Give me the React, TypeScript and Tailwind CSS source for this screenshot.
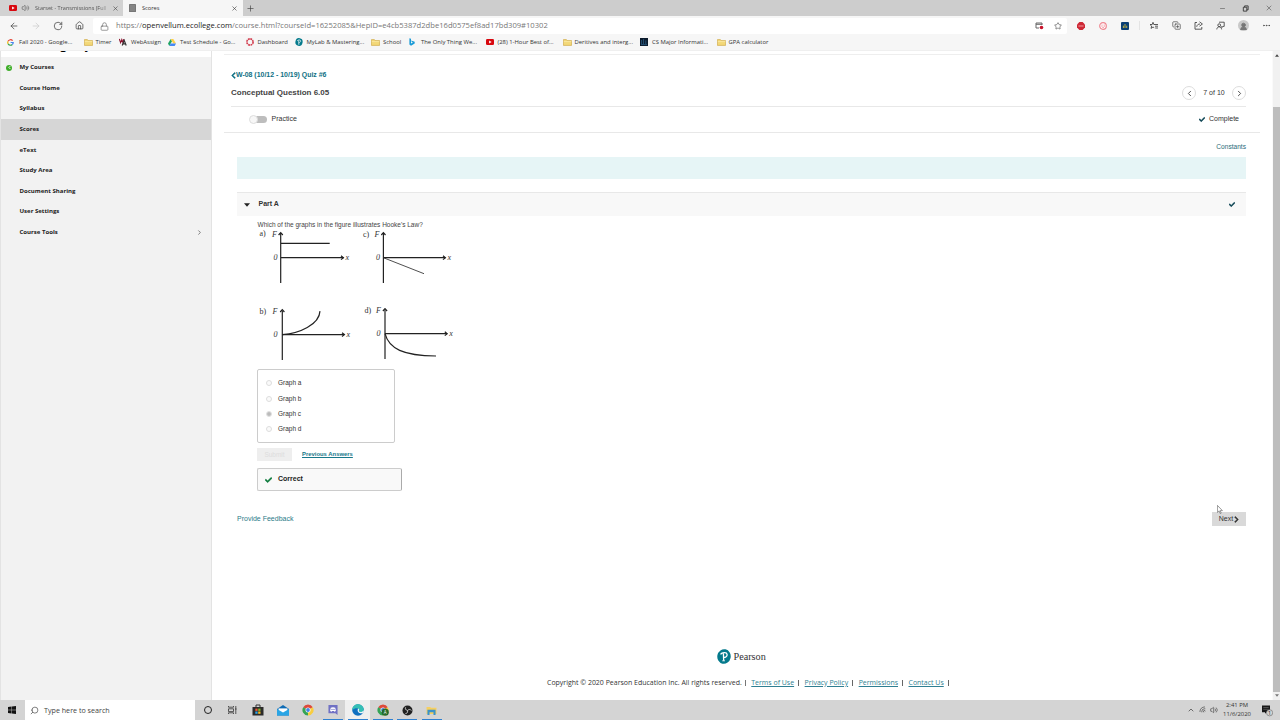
import type { ReactNode } from "react";
import {
  ArrowLeft,
  ArrowRight,
  ChevronLeft,
  ChevronRight,
  ChevronUp,
  CopyPlus,
  Ellipsis,
  Home,
  Lock,
  Minus,
  Plus,
  RotateCw,
  Search,
  Star,
  UserRound,
  Volume2,
  Wifi,
  X,
} from "lucide-react";
import { FaCheck, FaChevronLeft, FaChevronRight } from "react-icons/fa";

const YouTube = () => (
  <svg viewBox="0 0 8 6" className="h-[6px] w-[8px]">
    <rect width="8" height="6" rx="1.3" fill="#d8080f" />
    <path d="M3.1 1.6v2.8L5.6 3z" fill="#fff" />
  </svg>
);

const Folder = () => (
  <svg viewBox="0 0 9 7" className="h-[7px] w-[9px]">
    <path d="M.4 6.4V.6h3l.8 1h4.4v4.8z" fill="#f3d878" stroke="#c9a13b" strokeWidth=".6" />
    <path d="M.8 2.6h7.6" stroke="#fff0b8" strokeWidth=".6" />
  </svg>
);

const Google = () => (
  <svg viewBox="0 0 8 8" className="h-[7px] w-[7px]" fill="none" strokeWidth="1.4">
    <path d="M6.4 1.9A3.1 3.1 0 0 0 1.2 2.7" stroke="#e34436" />
    <path d="M1.2 2.7a3.1 3.1 0 0 0 0 2.7" stroke="#f2b90c" />
    <path d="M1.2 5.4A3.1 3.1 0 0 0 6.1 6.3" stroke="#36a453" />
    <path d="M6.1 6.3A3.1 3.1 0 0 0 7.1 4H4.1" stroke="#4485ef" />
  </svg>
);

const WebAssign = () => (
  <svg viewBox="0 0 8 8" className="h-[8px] w-[8px]" fill="none">
    <path d="M.3 1l1.3 3.6L2.8 1.6 4 4.6 4.8 1" stroke="#8e1632" strokeWidth="1.1" />
    <path d="M3.2 7.5L5.2 2.4l2 5.1M4 5.8h2.6" stroke="#333" strokeWidth="1.2" />
  </svg>
);

const Drive = () => (
  <svg viewBox="0 0 8 7" className="h-[7px] w-[8px]">
    <path d="M2.7 0L0 4.6 1.3 7 4 2.3z" fill="#1fa463" />
    <path d="M2.7 0h2.6L8 4.6H5.3z" fill="#ffcf48" />
    <path d="M1.3 7L2.7 4.6H8L6.7 7z" fill="#4688f4" />
  </svg>
);

const Canvas = () => (
  <svg viewBox="0 0 8 8" className="h-[8px] w-[8px]">
    <circle cx="4" cy="4" r="3.1" fill="none" stroke="#d1384a" strokeWidth="1.6" strokeDasharray="1.8 .63" />
  </svg>
);

const PearsonMark = ({ className }: { className: string }) => (
  <svg viewBox="0 0 14 15" className={className}>
    <ellipse cx="7" cy="7.5" rx="6.7" ry="7.3" fill="#047a8c" transform="rotate(12 7 7.5)" />
    <path d="M3.5 5.4C5 3.2 9.7 2.7 10.1 5.4c.3 2.1-1.7 3-3.4 3M6.4 4.6l.3 7" fill="none" stroke="#fff" strokeWidth="1.3" />
    <path d="M5.2 11.8h2.8" stroke="#fff" strokeWidth=".8" />
  </svg>
);

const Bing = () => (
  <svg viewBox="0 0 6 8" className="h-[8px] w-[6px]">
    <path d="M.4.2l1.6.5v4.9L4 4.6 2.8 4l-.7-1.6 3.6 1.3v1.8L2 7.7.4 6.6z" fill="#1a9bd7" />
  </svg>
);

const Information = () => (
  <svg viewBox="0 0 8 8" className="h-[8px] w-[8px]">
    <rect width="8" height="8" fill="#0c1b2c" />
    <path d="M1.6 2v4M3.6 1v5M5.8 2.4V6M1 6.6h6" stroke="#28587e" strokeWidth=".9" />
  </svg>
);

const bookmarks: { icon: ReactNode; label: string; width: string }[] = [
  { icon: <Google />, label: "Fall 2020 - Google...", width: "w-[76.5px]" },
  { icon: <Folder />, label: "Timer", width: "w-[35.5px]" },
  { icon: <WebAssign />, label: "WebAssign", width: "w-[49px]" },
  { icon: <Drive />, label: "Test Schedule - Go...", width: "w-[77.5px]" },
  { icon: <Canvas />, label: "Dashboard", width: "w-[49px]" },
  { icon: <PearsonMark className="h-[8px] w-[8px]" />, label: "MyLab & Mastering...", width: "w-[76.5px]" },
  { icon: <Folder />, label: "School", width: "w-[38px]" },
  { icon: <Bing />, label: "The Only Thing We...", width: "w-[76.5px]" },
  { icon: <YouTube />, label: "(28) 1-Hour Best of...", width: "w-[77px]" },
  { icon: <Folder />, label: "Deritives and interg...", width: "w-[77.5px]" },
  { icon: <Information />, label: "CS Major Informati...", width: "w-[76.5px]" },
  { icon: <Folder />, label: "GPA calculator", width: "w-[60px]" },
];

const menu = [
  "My Courses",
  "Course Home",
  "Syllabus",
  "Scores",
  "eText",
  "Study Area",
  "Document Sharing",
  "User Settings",
  "Course Tools",
];

function TabStrip() {
  return (
    <div className="flex h-[16px] shrink-0 items-stretch bg-[#cdcdcd] text-[6px] text-[#555]">
      <div className="flex w-[123px] items-center bg-[#d2d2d2] pl-[9px]">
        <YouTube />
        <Volume2 className="ml-[4px] h-[8px] w-[9px] text-[#555]" strokeWidth={1.8} />
        <span className="ml-[5px] w-[75px] text-[5.5px] whitespace-nowrap [mask-image:linear-gradient(to_right,black_85%,transparent)]">
          Starset - Transmissions (Full
        </span>
        <X className="ml-[2px] h-[7px] w-[7px] text-[#444]" strokeWidth={2} />
      </div>
      <div className="flex w-[120px] items-center bg-[#f6f6f6] pl-[6px] text-[#333]">
        <svg viewBox="0 0 7 8" className="h-[8px] w-[7px]">
          <rect width="7" height="8" rx=".6" fill="#777" />
          <path d="M1 2h5M1 4h5M1 6h5" stroke="#aaa" strokeWidth=".6" />
        </svg>
        <span className="ml-[6px] w-[89px] text-[5.7px]">Scores</span>
        <X className="h-[7px] w-[7px]" strokeWidth={2} />
      </div>
      <div className="flex flex-1 items-center justify-between pr-[7px]">
        <Plus className="ml-[3px] h-[9px] w-[9px] text-[#444]" strokeWidth={1.8} />
        <div className="flex items-center gap-[16px]">
          <Minus className="h-[7px] w-[7px]" strokeWidth={2} />
          <svg viewBox="0 0 8 8" className="h-[7px] w-[7px]" fill="none" stroke="#333" strokeWidth="1">
            <path d="M1.5 2.5h4v4.5h-4zM3 2.5V1h4v4.5H5.5" />
          </svg>
          <X className="h-[8px] w-[8px]" strokeWidth={1.8} />
        </div>
      </div>
    </div>
  );
}

function AddressBar() {
  return (
    <div className="flex h-[18px] shrink-0 items-center bg-[#f6f6f6] text-[#444]">
      <div className="flex w-[93px] items-center pt-[1px] pl-[9px]">
        <ArrowLeft className="h-[10px] w-[10px]" strokeWidth={1.8} />
        <ArrowRight className="ml-[12px] h-[10px] w-[10px] text-[#ccc]" strokeWidth={1.8} />
        <RotateCw className="ml-[12px] h-[10px] w-[10px]" strokeWidth={1.8} />
        <Home className="ml-[12px] h-[9px] w-[9px]" strokeWidth={2} />
      </div>
      <div className="flex h-[16px] w-[974px] items-center self-end rounded-[2px] bg-white">
        <Lock className="ml-[7px] h-[9px] w-[9px] text-[#666]" strokeWidth={1.7} />
        <span className="ml-[7px] w-[919px] text-[7.62px] leading-none whitespace-nowrap text-[#777]">
          https://<span className="text-[#222]">openvellum.ecollege.com</span>
          /course.html?courseId=16252085&amp;HepID=e4cb5387d2dbe16d0575ef8ad17bd309#10302
        </span>
        <svg viewBox="0 0 9 8" className="h-[8px] w-[9px] shrink-0" fill="none" stroke="#666">
          <path d="M4 6H1V1h6v2M1 2.3h6" />
          <circle cx="6.5" cy="5.5" r="1.8" fill="#c9142c" stroke="none" />
        </svg>
        <Star className="ml-[10px] h-[8px] w-[8px] shrink-0" strokeWidth={1.8} />
      </div>
      <div className="flex flex-1 items-center pt-[1px]">
        <svg viewBox="0 0 8 8" className="ml-[10px] h-[8px] w-[8px]">
          <path d="M2.4 0h3.2L8 2.4v3.2L5.6 8H2.4L0 5.6V2.4z" fill="#ce2936" />
          <path d="M1.4 4h5.2" stroke="#f29da3" />
        </svg>
        <svg viewBox="0 0 8 8" className="ml-[14px] h-[8px] w-[8px]">
          <circle cx="4" cy="4" r="3.3" fill="#fff" stroke="#ef8791" strokeWidth="1.2" />
          <path d="M3 2.4v2.5l1 1 1.2-1V2.4" fill="none" stroke="#ef8791" strokeWidth=".7" />
        </svg>
        <svg viewBox="0 0 8 8" className="ml-[14px] h-[8px] w-[8px]">
          <rect width="8" height="8" rx="1" fill="#0a3f75" />
          <path d="M2.4 6V3.7M4 6V2M5.7 6V3.7" stroke="#b9ae47" />
        </svg>
        <span className="ml-[10px] h-[9px] w-px bg-[#e4e4e4]" />
        <svg viewBox="0 0 10 9" className="ml-[9px] h-[9px] w-[10px]" fill="none" stroke="#333" strokeWidth=".8">
          <path d="M5.2 6.7L4 6 2 7.4l.7-2.3L1 3.5h2.2L4 1.3l.8 2.2H9M6 5.2h3M6.2 7h2.8" />
        </svg>
        <CopyPlus className="ml-[13px] h-[9px] w-[9px]" strokeWidth={1.8} />
        {/* Share: open box with a bent arrow */}
        <svg viewBox="0 0 9 9" className="ml-[13px] h-[9px] w-[9px]" fill="none" stroke="#333" strokeWidth=".8">
          <path d="M3 1.5H1v6.7h6.8V6M2.7 5.8C3 3.8 4.3 3 6 3M5.5.8L8.4 3 5.5 5.2" />
        </svg>
        <svg viewBox="0 0 9 9" className="ml-[13px] h-[9px] w-[9px]" fill="none" stroke="#333" strokeWidth=".8">
          <circle cx="3.2" cy="4.2" r="1.4" />
          <path d="M.8 8.4C1 5 5.4 5 5.6 8.4M3 1.2h5.2v4.2H7L5.7 6.6V5.2" />
        </svg>
        <span className="ml-[13px] flex h-[11px] w-[11px] items-end justify-center overflow-hidden rounded-full bg-[#c9c9c9]">
          <UserRound className="h-[9px] w-[9px] fill-[#777] text-[#777]" />
        </span>
        <Ellipsis className="ml-[13px] h-[9px] w-[9px]" strokeWidth={2} />
      </div>
    </div>
  );
}

function Bookmarks() {
  return (
    <div className="flex h-[17px] shrink-0 items-center border-b border-[#efefef] bg-[#f6f6f6] pt-px pl-[7px] text-[5.9px] text-[#333]">
      {bookmarks.map((b) => (
        <div key={b.label} className={`flex shrink-0 items-center whitespace-nowrap ${b.width}`}>
          <span className="flex w-[12px] items-center">{b.icon}</span>
          {b.label}
        </div>
      ))}
    </div>
  );
}

function Sidebar() {
  return (
    <aside className="flex w-[212px] shrink-0 flex-col border-r border-l border-[#e3e3e3] bg-[#f2f2f2]">
      {/* Course title, scrolled almost out of view */}
      <div className="flex h-[6px] items-end overflow-hidden bg-white pl-[59px]">
        <div className="h-[22px] text-[12px] leading-[20px] font-semibold whitespace-pre text-black">g Phy</div>
      </div>
      <nav className="pt-[0.4px] text-[6.05px] font-bold text-[#222]">
        {menu.map((item) => (
          <div
            key={item}
            className={`flex h-[20.6px] items-center pr-[8px] ${item === "Scores" ? "bg-[#d6d6d6]" : ""}`}
          >
            <span className="flex w-[18.5px] shrink-0 pl-[5px]">
              {item === "My Courses" && (
                <span className="flex h-[6px] w-[6px] items-center justify-center rounded-full bg-[#3fae2a] text-white">
                  <ChevronLeft className="h-[5px] w-[5px]" strokeWidth={4} />
                </span>
              )}
            </span>
            <span className="flex-1">{item}</span>
            {item === "Course Tools" && <ChevronRight className="h-[7px] w-[7px] text-[#555]" strokeWidth={2.5} />}
          </div>
        ))}
      </nav>
    </aside>
  );
}

/* The four force / displacement plots of the question */
function Graphs() {
  return (
    <svg viewBox="257 229 200 134" className="h-[134px] w-[200px]" fill="none" stroke="#222" strokeWidth="1.2">
      <path d="M280.7 233v50M280.7 257.7h63M280.7 243.3h49" />
      <path d="M383.4 233v50M383.4 257.7h62" />
      <path d="M383.4 257.7l40.6 16" strokeWidth=".8" />
      <path d="M282.3 311v49M282.3 334.6h62" />
      <path d="M282.3 334.6c17-1 37-10 37.7-23.5" />
      <path d="M385 310v49M385 333.7h62" />
      <path d="M385 333.7c4 15 18 22 51 22.3" />
      {/* Arrow heads */}
      <path d="M278.6 235l2.1-2.4 2.1 2.4M381.3 235l2.1-2.4 2.1 2.4M280.2 312l2.1-2.4 2.1 2.4M382.9 311l2.1-2.4 2.1 2.4" />
      <path d="M341 255.8l2.4 1.9-2.4 1.9M443 255.8l2.4 1.9-2.4 1.9M342 332.7l2.4 1.9-2.4 1.9M444.8 331.8l2.4 1.9-2.4 1.9" />
      <g fill="#333" stroke="none" fontFamily="Liberation Serif, serif" fontSize="8">
        <text x="259.5" y="236">a)</text>
        <text x="363" y="236.5">c)</text>
        <text x="259.5" y="313.5">b)</text>
        <text x="364.5" y="312.5">d)</text>
        <g fontStyle="italic">
          <text x="272" y="236.5">F</text>
          <text x="374.5" y="236.5">F</text>
          <text x="272.5" y="314">F</text>
          <text x="376" y="313">F</text>
          <text x="273.5" y="260">0</text>
          <text x="376" y="260">0</text>
          <text x="273.5" y="337">0</text>
          <text x="376.5" y="336">0</text>
          <text x="345.5" y="260">x</text>
          <text x="447.5" y="260">x</text>
          <text x="346.5" y="337">x</text>
          <text x="449.3" y="336">x</text>
        </g>
      </g>
    </svg>
  );
}

function Question() {
  return (
    <section className="ml-[20px] flex flex-col items-start text-[6.5px] text-[#333]">
      <p className="mt-[3px] h-[10px] pl-[0.5px] leading-[12px] whitespace-nowrap text-[#444]">
        Which of the graphs in the figure illustrates Hooke's Law?
      </p>
      <Graphs />
      <div className="mt-[6px] flex h-[74px] w-[138px] flex-col rounded-[2px] border border-[#ccc] pt-[5.5px] pl-[8px]">
        {["Graph a", "Graph b", "Graph c", "Graph d"].map((label) => (
          <label key={label} className="flex h-[15.4px] items-center gap-[6px]">
            <span className="flex h-[6px] w-[6px] items-center justify-center rounded-full border border-[#ddd] bg-[#fafafa]">
              {label === "Graph c" && <span className="h-[4px] w-[4px] shrink-0 rounded-full bg-[#bbb]" />}
            </span>
            {label}
          </label>
        ))}
      </div>
      <div className="mt-[5px] flex h-[13px] items-center">
        <button className="h-[13px] w-[35px] bg-[#eee] text-[#ddd]">Submit</button>
        <a className="ml-[10px] text-[5.9px] font-bold text-[#18788a] underline">Previous Answers</a>
      </div>
      <div className="mt-[7px] flex h-[23px] w-[145px] items-center rounded-[2px] border border-[#ccc] border-r-[#aaa] bg-[#f9f9f9] pl-[7px] text-[7px] font-bold text-[#222]">
        <FaCheck className="mr-[6px] h-[8px] w-[7px] stroke-[#0c7a3c] stroke-[30px] text-[#0c7a3c]" />
        Correct
      </div>
    </section>
  );
}

function Content() {
  return (
    <main className="flex w-[1060px] flex-col bg-white pr-[12px] pl-[12px] font-['Liberation_Sans',Arial,sans-serif]">
      <div className="mt-[3px] h-px bg-[#eee]" />
      <div className="flex h-[51px] justify-between pr-[14px] pl-[7px]">
        <div>
          <div className="mt-[15.5px] flex h-[9px] items-center text-[6.95px] font-bold text-[#0e7084]">
            <FaChevronLeft className="h-[7px] w-[5px] stroke-[#0e7084] stroke-[30px]" />
            W-08 (10/12 - 10/19) Quiz #6
          </div>
          <h1 className="mt-[8.5px] text-[8px] leading-[10px] font-bold text-[#444]">Conceptual Question 6.05</h1>
        </div>
        <div className="mt-[31px] flex h-[14px] items-center text-[7px] text-[#333]">
          <span className="flex h-[14px] w-[14px] items-center justify-center rounded-full border border-[#ddd]">
            <ChevronLeft className="h-[9px] w-[9px]" strokeWidth={2.2} />
          </span>
          <span className="w-[36px] pt-px text-center">7 of 10</span>
          <span className="flex h-[14px] w-[14px] items-center justify-center rounded-full border border-[#ddd]">
            <ChevronRight className="h-[9px] w-[9px]" strokeWidth={2.2} />
          </span>
        </div>
      </div>
      <div className="mr-[14px] ml-[7px] h-px bg-[#e8e8e8]" />
      <div className="flex h-[26px] items-center justify-between border-b border-[#e8e8e8] pr-[21px] pl-[25px] text-[7px] text-[#333]">
        <span className="flex items-center gap-[3.5px]">
          <span className="flex h-[10px] w-[19px] items-center">
            <span className="z-10 h-[9px] w-[9px] rounded-full border border-[#ddd] bg-[#f7f7f7]" />
            <span className="-ml-[5px] h-[7px] w-[14px] rounded-full bg-[#bdbdbd]" />
          </span>
          Practice
        </span>
        <span className="flex items-center gap-[4px]">
          <FaCheck className="h-[7px] w-[6px] stroke-[#0d4554] stroke-[30px] text-[#0d4554]" />
          Complete
        </span>
      </div>
      <div className="mr-[14px] ml-[13px] flex flex-1 flex-col">
        <a className="mt-[9px] h-[9px] self-end text-[6.6px] leading-[9px] text-[#2b6b78]">Constants</a>
        <div className="mt-[6px] h-[22px] bg-[#e6f5f6]" />
        <div className="mt-[13px] flex h-[24px] items-center border-t border-[#e8e8e8] bg-[#f8f8f8] pr-[11px] pl-[7px]">
          <svg viewBox="0 0 6 4" className="h-[4px] w-[6px]">
            <path d="M0 .2h6L3 3.8z" fill="#222" />
          </svg>
          <h2 className="ml-[8.5px] flex-1 text-[7px] font-bold text-[#333]">Part A</h2>
          <FaCheck className="h-[7px] w-[6px] stroke-[#0d4554] stroke-[30px] text-[#0d4554]" />
        </div>
        <Question />
        <div className="mt-[21px] flex h-[14px] items-center justify-between text-[7px]">
          <a className="text-[#2b7a88]">Provide Feedback</a>
          <button className="flex h-[14px] w-[34px] items-center justify-center bg-[#d9d9d9] text-[#333]">
            Next
            <FaChevronRight className="ml-[1px] h-[7px] w-[5px] stroke-[#333] stroke-[30px]" />
          </button>
        </div>
      </div>
    </main>
  );
}

function Footer() {
  const links = ["Terms of Use", "Privacy Policy", "Permissions", "Contact Us"];
  return (
    <footer className="flex flex-col items-start pl-[335px] text-[6.97px] text-[#333]">
      <div className="ml-[170px] flex h-[16px] items-center gap-[2.5px]">
        <PearsonMark className="h-[15px] w-[14px]" />
        <span className="pt-px font-['Liberation_Serif',serif] text-[10.2px] text-[#333]">Pearson</span>
      </div>
      <div className="mt-[14px] flex h-[10px] items-center whitespace-nowrap">
        <span>Copyright © 2020 Pearson Education Inc. All rights reserved.</span>
        <span className="ml-[3px] h-[6px] w-px bg-[#777]" />
        {links.map((link) => (
          <span key={link} className="flex items-center">
            <a className="ml-[5.5px] text-[#2f7f92] underline">{link}</a>
            <span className="ml-[4px] h-[6px] w-px bg-[#666]" />
          </span>
        ))}
      </div>
    </footer>
  );
}

function Scrollbar() {
  return (
    <div className="flex w-[8px] shrink-0 flex-col items-center justify-between border-l border-[#fafafa] bg-[#f1f1f1] py-[3px]">
      <svg viewBox="0 0 5 3" className="h-[3px] w-[4px]">
        <path d="M0 3L2.5 0 5 3z" fill="#444" />
      </svg>
      <div className="mt-[50px] mb-[2px] w-[7px] flex-1 bg-[#bdbdbd]" />
      <svg viewBox="0 0 5 3" className="h-[3px] w-[4px]">
        <path d="M0 0l2.5 3L5 0z" fill="#777" />
      </svg>
    </div>
  );
}

const taskbarApps: { name: string; cell: string; icon: ReactNode }[] = [
  {
    name: "store",
    cell: "w-[25px]",
    icon: (
      <svg viewBox="0 0 12 12" className="h-[12px] w-[12px]">
        <path d="M4 3V1h4v2" fill="none" stroke="#333" />
        <path d="M.5 3h11v8.5H.5z" fill="#2b2b2b" />
        <path d="M3.3 4.6h2.3v2.3H3.3z" fill="#e95533" />
        <path d="M6.2 4.6h2.3v2.3H6.2z" fill="#7fba2b" />
        <path d="M3.3 7.5h2.3v2.3H3.3z" fill="#2ba4e8" />
        <path d="M6.2 7.5h2.3v2.3H6.2z" fill="#f7bb20" />
      </svg>
    ),
  },
  {
    name: "mail",
    cell: "w-[25px]",
    icon: (
      <svg viewBox="0 0 12 11" className="h-[11px] w-[12px]">
        <path d="M0 4l6-4 6 4v6.5H0z" fill="#0f6cb5" />
        <path d="M1.5 3.4h9V8h-9z" fill="#fff" />
        <path d="M0 4l6 3.6L12 4v6.5H0z" fill="#2aa5e5" />
      </svg>
    ),
  },
  {
    name: "chrome",
    cell: "w-[25px]",
    icon: <Chrome />,
  },
  {
    name: "discord",
    cell: "w-[25px]",
    icon: (
      <svg viewBox="0 0 10 11" className="h-[10px] w-[10px]">
        <path d="M0 0h10v11L7.6 9H0z" fill="#7071c4" />
        <path d="M2.5 3q2.5-1 5 0l.7 3.5-1.7.8L6 6.5H4l-.5.8-1.7-.8z" fill="#fff" />
        <circle cx="3.9" cy="4.9" r=".7" fill="#7071c4" />
        <circle cx="6.1" cy="4.9" r=".7" fill="#7071c4" />
      </svg>
    ),
  },
  {
    name: "edge",
    cell: "w-[25px] bg-[#efefef]",
    icon: (
      <svg viewBox="0 0 12 12" className="h-[12px] w-[12px]">
        <circle cx="6" cy="6" r="5.8" fill="#0e6fc0" />
        <path d="M.3 6C.5-1.5 11-1.5 11.8 5.5c0 3-4 3-4.8 1.8C8 4.4 4 3 .3 6z" fill="#35bfb4" />
        <path d="M6.5 4.5C4.5 6 6 10 10.5 9.2 12 8 12 6.8 11.8 6.2 10 8.8 7 8 6.8 7c.5-1 .5-2-.3-2.5z" fill="#f1f6f8" />
      </svg>
    ),
  },
  {
    name: "chrome-profile",
    cell: "w-[25px]",
    icon: <Chrome badge />,
  },
  {
    name: "obs",
    cell: "w-[24px]",
    icon: (
      <svg viewBox="0 0 11 11" className="h-[11px] w-[11px]">
        <circle cx="5.5" cy="5.5" r="5" fill="#222" />
        <path d="M5.5 5.5C3.6 5 3 3.7 3.6 2.4M5.5 5.5c1.4-1.4 3-1.3 3.8 0M5.5 5.5c.4 1.9-.5 3-2 3" fill="none" stroke="#ccc" />
      </svg>
    ),
  },
  {
    name: "explorer",
    cell: "w-[25px]",
    icon: (
      <svg viewBox="0 0 11 10" className="h-[9px] w-[11px]">
        <path d="M0 1h4l1 1h6v7H0z" fill="#f6cf5f" />
        <path d="M1 4.2h9V10H7.7V7H3.3v3H1z" fill="#3b93c9" />
      </svg>
    ),
  },
];

const runningApps = ["discord", "edge", "chrome-profile", "obs", "explorer"];

function Chrome({ badge }: { badge?: boolean }) {
  return (
    <svg viewBox="0 0 12 12" className="h-[12px] w-[12px]">
      <path d="M6 6L1.2 3.2A5.5 5.5 0 0 1 10.8 3.2z" fill="#de4a3b" />
      <path d="M6 6l4.8-2.8A5.5 5.5 0 0 1 6 11.5z" fill="#f8cd3f" />
      <path d="M6 6v5.5A5.5 5.5 0 0 1 1.2 3.2z" fill="#35a355" />
      <circle cx="6" cy="6" r="2.5" fill="#fff" />
      <circle cx="6" cy="6" r="1.9" fill="#4583e6" />
      {badge && <circle cx="8.2" cy="8.2" r="3.6" fill="#266a2c" />}
      {badge && (
        <text x="8.2" y="10" fontSize="4.5" fill="#fff" textAnchor="middle">
          A
        </text>
      )}
    </svg>
  );
}

function Taskbar() {
  return (
    <div className="flex h-[20px] shrink-0 items-stretch bg-[#d4d4d4] text-[#333]">
      <div className="flex w-[25px] items-center pl-[8px]">
        <svg viewBox="0 0 8 8" className="h-[8px] w-[8px]" fill="#111">
          <path d="M0 1l3.6-.5v3.2H0zM4 .5L8 0v3.7H4zM0 4.2h3.6v3.3L0 7zM4 4.2h4V8l-4-.5z" />
        </svg>
      </div>
      <div className="flex w-[170px] items-center bg-white pt-px pl-[5px] text-[7.15px] text-[#444]">
        <Search className="h-[9px] w-[9px] -scale-x-100" strokeWidth={1.8} />
        <span className="ml-[5px]">Type here to search</span>
      </div>
      <div className="flex w-[25px] items-center justify-center">
        <span className="h-[8px] w-[8px] rounded-full border-[1.4px] border-[#222]" />
      </div>
      <div className="flex w-[25px] items-center justify-center">
        <svg viewBox="0 0 9 8" className="h-[8px] w-[9px]" fill="none" stroke="#333" strokeWidth=".8">
          <path d="M.5 0v1.2h5V0M.5 2.8h5v2.8h-5zM.5 8V6.8h5V8M7.8 0v8M7 3h1.6" />
        </svg>
      </div>
      {taskbarApps.map((app) => (
        <div key={app.name} className={`flex flex-col items-center ${app.cell}`}>
          <span className="flex h-[19px] items-center pt-px">{app.icon}</span>
          {runningApps.includes(app.name) && <span className="h-px w-[20px] bg-[#2f80d0]" />}
        </div>
      ))}
      <div className="ml-auto flex items-center">
        <ChevronUp className="h-[8px] w-[8px]" strokeWidth={2} />
        <Wifi className="ml-[4px] h-[8px] w-[8px] -rotate-45" strokeWidth={1.7} />
        <Volume2 className="ml-[3px] h-[8px] w-[8px]" strokeWidth={1.7} />
        <div className="ml-[3px] flex w-[32px] flex-col items-center text-[5.9px] leading-[9px]">
          <span>2:41 PM</span>
          <span>11/6/2020</span>
        </div>
        <div className="ml-[8px] h-[13px] w-[19px]">
          <svg viewBox="0 0 12 13" className="h-[13px] w-[12px]">
            <path d="M1 1.5h8v6.7H5.5L4 9.8V8.2H1z" fill="#181818" />
            <path d="M2.3 3.5h5.4M2.3 5.3h5.4" stroke="#777" strokeWidth=".6" />
            <circle cx="8.6" cy="8.8" r="3.1" fill="#d4d4d4" stroke="#666" strokeWidth=".6" />
            <text x="8.6" y="10.7" fontSize="5.4" fill="#222" textAnchor="middle">
              1
            </text>
          </svg>
        </div>
      </div>
    </div>
  );
}

export default function App() {
  return (
    <div className="relative flex h-[720px] w-[1280px] flex-col overflow-hidden bg-white font-['Open_Sans','Noto_Sans',sans-serif]">
      <TabStrip />
      <AddressBar />
      <Bookmarks />
      <div className="flex h-[649px] shrink-0">
        <Sidebar />
        <div className="flex w-[1060px] shrink-0 flex-col justify-between pb-[12px]">
          <Content />
          <Footer />
        </div>
        <Scrollbar />
      </div>
      <Taskbar />
      {/* Mouse pointer */}
      <svg viewBox="0 0 6 9" className="absolute top-[505px] left-[1217px] h-[9px] w-[6px]">
        <path d="M.4.4v7l1.7-1.5 1.1 2.6 1-.4-1-2.5h2.2z" fill="#fff" stroke="#555" strokeWidth=".6" />
      </svg>
    </div>
  );
}
